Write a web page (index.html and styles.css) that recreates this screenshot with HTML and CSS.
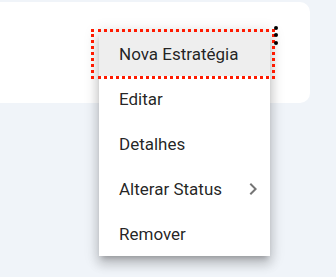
FILE: index.html
```html
<!DOCTYPE html>
<html lang="pt">
<head>
<meta charset="utf-8">
<link rel="stylesheet" href="styles.css">
</head>
<body>
<div class="page">
  <div class="card"></div>
  <div class="menu">
    <div class="item focused">Nova Estratégia</div>
    <div class="item">Editar</div>
    <div class="item">Detalhes</div>
    <div class="item sub">Alterar Status
      <svg class="chev" width="24" height="24" viewBox="0 0 24 24"><path d="M10 6 8.59 7.41 13.17 12l-4.58 4.59L10 18l6-6z" fill="#757575"/></svg>
    </div>
    <div class="item">Remover</div>
  </div>
  <div class="kebab"><span></span><span></span><span></span></div>
</div>
</body>
</html>
```
FILE: styles.css
```css
html, body {
  margin: 0;
  padding: 0;
  background: #f0f4f9;
  font-family: Roboto, "Liberation Sans", sans-serif;
}
.page {
  position: relative;
  width: 336px;
  height: 277px;
  overflow: hidden;
  padding-top: 2px;
  box-sizing: border-box;
}
.card {
  margin-left: -12px;
  width: 322px;
  height: 101px;
  background: #fff;
  border-radius: 10px;
}
.menu {
  position: absolute;
  left: 99px;
  top: 30px;
  width: 171px;
  padding-top: 1px;
  background: #fff;
  box-shadow: 0 5px 5px -3px rgba(0,0,0,.2), 0 8px 10px 1px rgba(0,0,0,.14), 0 3px 14px 2px rgba(0,0,0,.12);
}
.item {
  height: 45px;
  display: flex;
  align-items: center;
  justify-content: space-between;
  padding: 1px 5px 0 20px;
  box-sizing: border-box;
  font-size: 17px;
  color: rgba(0,0,0,.87);
  position: relative;
}
.item.focused {
  background: #eeeeee;
  margin-top: -1px;
  height: 46px;
}
.item.focused::after {
  content: "";
  position: absolute;
  left: -8px;
  right: -5px;
  top: -1px;
  bottom: -3px;
  border: 3px dotted #ff1a00;
}
.chev {
  display: block;
}
.kebab {
  position: absolute;
  left: 274px;
  top: 26px;
  display: flex;
  flex-direction: column;
  gap: 3.3px;
}
.kebab span {
  width: 4px;
  height: 4px;
  border-radius: 50%;
  background: #000;
}
```
